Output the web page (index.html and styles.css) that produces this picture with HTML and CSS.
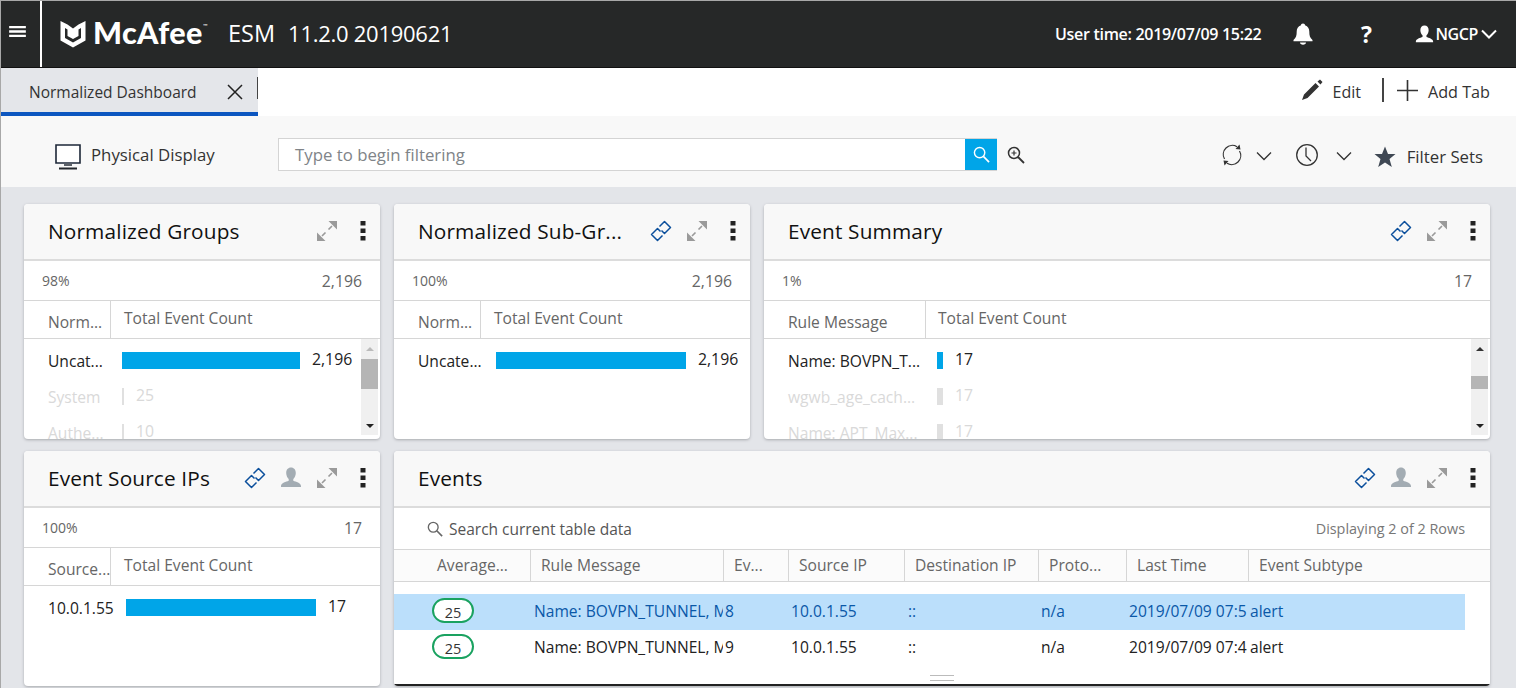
FILE: index.html
```html
<!DOCTYPE html>
<html lang="en">
<head>
<meta charset="utf-8">
<title>McAfee ESM</title>
<link rel="stylesheet" href="styles.css">
</head>
<body>
<svg class="defs" width="0" height="0" aria-hidden="true">
  <symbol id="i-expand" viewBox="0 0 22 22">
    <path d="M1 21V12.500L9.500 21Z M21 1V9.500L12.500 1Z" fill="#9a9a9a"/>
    <path d="M6 16L9.500 12.500M16 6L12.500 9.500" stroke="#9a9a9a" stroke-width="1.600" fill="none"/>
  </symbol>
  <symbol id="i-link" viewBox="0 0 22 22">
    <path d="M9.500 6.500L14.500 1.500L20.500 7.500L14.500 13.500L11.500 10.500M12.500 15.500L7.500 20.500L1.500 14.500L7.500 8.500L10.500 11.500" fill="none" stroke="#0b4f9c" stroke-width="1.500" stroke-linejoin="round"/>
  </symbol>
  <symbol id="i-person" viewBox="0 0 22 22">
    <path d="M11 0.500c3 0 4.800 2.300 4.800 5.500 0 2.600-1.200 4.800-2.500 6v1.800c2.500 1 7.700 2.200 7.700 5.200v1H1v-1c0-3 5.200-4.200 7.700-5.200V12C7.400 10.800 6.200 8.600 6.200 6c0-3.200 1.800-5.500 4.800-5.500Z" fill="currentColor"/>
  </symbol>
  <symbol id="i-kebab" viewBox="0 0 6 22">
    <path d="M0.500 1h5v4.500h-5ZM0.500 8.500h5V13h-5ZM0.500 16h5v4.500h-5Z" fill="#222"/>
  </symbol>
  <symbol id="i-chev" viewBox="0 0 16 10">
    <path d="M1 1.500L8 8.500L15 1.500" fill="none" stroke="currentColor"/>
  </symbol>
  <symbol id="i-search" viewBox="0 0 18 18">
    <circle cx="7" cy="7" r="5.500" fill="none" stroke="currentColor" stroke-width="1.500"/>
    <path d="M11 11L17 17" stroke="currentColor" stroke-width="1.800"/>
  </symbol>
</svg>

<div class="app">
  <header class="topbar">
    <div class="menu-cell">
      <svg class="menu-icon" viewBox="0 0 18 14"><path d="M0 1h18v2.600H0ZM0 5.700h18v2.600H0ZM0 10.400h18V13H0Z" fill="#fff"/></svg>
    </div>
    <svg class="logo-shield" viewBox="0 0 26 28">
      <path d="M0.500 1L7.500 4.500L13 8.500L18.500 4.500L25.500 1V20.500L13 27.500L0.500 20.500Z M5 8V18L13 22.500L21 18V8L18.500 9.500V16L13 19L7.500 16V9.500Z" fill="#fff" fill-rule="evenodd"/>
    </svg>
    <span class="logo-text">McAfee<sup class="tm">™</sup></span>
    <span class="product">ESM</span>
    <span class="version">11.2.0 20190621</span>
    <span class="user-time">User time: 2019/07/09 15:22</span>
    <svg class="bell" viewBox="0 0 22 22"><path d="M11 0.500c1.300 0 2 .8 2 1.800 3 .9 4.300 3.400 4.300 6.200 0 4 .6 6.200 3.200 8.500v1.300H1.500V17c2.600-2.300 3.200-4.500 3.200-8.500 0-2.800 1.300-5.300 4.300-6.200 0-1 .7-1.800 2-1.800ZM8 19.500h6c0 1.300-1.300 2.200-3 2.200s-3-.9-3-2.200Z" fill="#fff"/></svg>
    <span class="help">?</span>
    <svg class="user-icon"><use href="#i-person"/></svg>
    <span class="user-name">NGCP</span>
    <svg class="user-chev"><use href="#i-chev"/></svg>
  </header>

  <div class="tabbar">
    <div class="tab">
      <span class="tab-label">Normalized Dashboard</span>
      <svg class="tab-close" viewBox="0 0 16 16"><path d="M1 1L15 15M15 1L1 15" stroke="#222" stroke-width="1.500"/></svg>
      <span class="tab-sep"></span>
    </div>
    <div class="tab-actions">
      <svg class="pencil" viewBox="0 0 22 22"><path d="M1 21L3 15.500L14.500 4L18 7.500L6.500 19Z M16.500 2.500L19 0.500L21.500 3L19.500 5.500Z" fill="#333"/></svg>
      <span class="edit">Edit</span>
      <span class="action-sep"></span>
      <svg class="plus" viewBox="0 0 22 22"><path d="M11 0V22M0 11H22" stroke="#333" stroke-width="1.700"/></svg>
      <span class="addtab">Add Tab</span>
    </div>
  </div>

  <div class="toolbar">
    <svg class="monitor" viewBox="0 0 26 26"><path d="M1 1H25V19H1Z" fill="#fff" stroke="#1d2738" stroke-width="1.600"/><path d="M9 19.500H17V22H9Z" fill="#5b6068"/><path d="M4 23.500H22V25.500H4Z" fill="#22262c"/></svg>
    <span class="display-name">Physical Display</span>
    <div class="filter">
      <span class="filter-text">Type to begin filtering</span>
      <span class="filter-btn"><svg class="filter-glass"><use href="#i-search"/></svg></span>
    </div>
    <svg class="zoom-plus" viewBox="0 0 18 18"><circle cx="7" cy="7" r="5.500" fill="none" stroke="#333" stroke-width="1.500"/><path d="M11 11L17 17" stroke="#333" stroke-width="1.800"/><path d="M4.500 7H9.500M7 4.500V9.500" stroke="#333" stroke-width="1.200"/></svg>
    <div class="tools">
      <svg class="refresh" viewBox="0 0 24 24"><path d="M4.500 16A9 9 0 0 1 17 3.800M19.500 8A9 9 0 0 1 7 20.200" fill="none" stroke="#333" stroke-width="1.200"/><path d="M19.500 1.500L20.500 6.500L15.500 6Z M4.500 22.500L3.500 17.500L8.500 18Z" fill="#333"/></svg>
      <svg class="chev chev-a"><use href="#i-chev"/></svg>
      <svg class="clock" viewBox="0 0 24 24"><circle cx="12" cy="12" r="10.300" fill="none" stroke="#333" stroke-width="1.300"/><path d="M11 4.500V13L16 18" fill="none" stroke="#333" stroke-width="1.300"/></svg>
      <svg class="chev chev-b"><use href="#i-chev"/></svg>
      <svg class="star" viewBox="0 0 22 22"><path d="M11 0.500L14 8H21.500L15.500 13L17.800 21L11 16.500L4.200 21L6.500 13L0.500 8H8Z" fill="#3f4854"/></svg>
      <span class="filter-sets">Filter Sets</span>
    </div>
  </div>

  <main class="grid">
    <section class="card">
      <div class="card-head">
        <h2 class="card-title">Normalized Groups</h2>
        <svg class="ic-expand"><use href="#i-expand"/></svg>
        <svg class="ic-kebab"><use href="#i-kebab"/></svg>
      </div>
      <div class="stat"><span class="stat-pct">98%</span><span class="stat-val">2,196</span></div>
      <div class="cols cols-small"><span class="col-a">Norm...</span><span class="col-b">Total Event Count</span></div>
      <div class="body">
        <div class="rows">
          <div class="row row-small"><span class="name">Uncat...</span><span class="bar" style="width:178px"></span><span class="val">2,196</span></div>
          <div class="row row-small dim"><span class="name">System</span><span class="bar" style="width:2px"></span><span class="val">25</span></div>
          <div class="row row-small dim"><span class="name">Authe...</span><span class="bar" style="width:2px"></span><span class="val">10</span></div>
        </div>
        <div class="scroll scroll-a"><span class="up"></span><span class="thumb thumb-a"></span><span class="down"></span></div>
      </div>
    </section>

    <section class="card">
      <div class="card-head">
        <h2 class="card-title">Normalized Sub-Gr...</h2>
        <svg class="ic-link"><use href="#i-link"/></svg>
        <svg class="ic-expand"><use href="#i-expand"/></svg>
        <svg class="ic-kebab"><use href="#i-kebab"/></svg>
      </div>
      <div class="stat"><span class="stat-pct">100%</span><span class="stat-val">2,196</span></div>
      <div class="cols cols-small"><span class="col-a">Norm...</span><span class="col-b">Total Event Count</span></div>
      <div class="body">
        <div class="rows">
          <div class="row row-small"><span class="name name-sub">Uncate...</span><span class="bar" style="width:190px"></span><span class="val">2,196</span></div>
        </div>
      </div>
    </section>

    <section class="card">
      <div class="card-head">
        <h2 class="card-title">Event Summary</h2>
        <svg class="ic-link"><use href="#i-link"/></svg>
        <svg class="ic-expand"><use href="#i-expand"/></svg>
        <svg class="ic-kebab"><use href="#i-kebab"/></svg>
      </div>
      <div class="stat"><span class="stat-pct">1%</span><span class="stat-val">17</span></div>
      <div class="cols cols-wide"><span class="col-a">Rule Message</span><span class="col-b">Total Event Count</span></div>
      <div class="body">
        <div class="rows">
          <div class="row row-wide"><span class="name">Name: BOVPN_T...</span><span class="bar" style="width:6px"></span><span class="val">17</span></div>
          <div class="row row-wide dim"><span class="name">wgwb_age_cach...</span><span class="bar" style="width:6px"></span><span class="val">17</span></div>
          <div class="row row-wide dim"><span class="name">Name: APT_Max...</span><span class="bar" style="width:6px"></span><span class="val">17</span></div>
        </div>
        <div class="scroll"><span class="up"></span><span class="thumb thumb-b"></span><span class="down"></span></div>
      </div>
    </section>

    <section class="card">
      <div class="card-head">
        <h2 class="card-title">Event Source IPs</h2>
        <svg class="ic-link"><use href="#i-link"/></svg>
        <svg class="ic-person"><use href="#i-person"/></svg>
        <svg class="ic-expand"><use href="#i-expand"/></svg>
        <svg class="ic-kebab"><use href="#i-kebab"/></svg>
      </div>
      <div class="stat"><span class="stat-pct">100%</span><span class="stat-val">17</span></div>
      <div class="cols cols-small"><span class="col-a">Source...</span><span class="col-b">Total Event Count</span></div>
      <div class="body">
        <div class="rows">
          <div class="row row-ip"><span class="name">10.0.1.55</span><span class="bar" style="width:190px"></span><span class="val">17</span></div>
        </div>
      </div>
    </section>

    <section class="card card-events">
      <div class="card-head">
        <h2 class="card-title">Events</h2>
        <svg class="ic-link"><use href="#i-link"/></svg>
        <svg class="ic-person"><use href="#i-person"/></svg>
        <svg class="ic-expand"><use href="#i-expand"/></svg>
        <svg class="ic-kebab"><use href="#i-kebab"/></svg>
      </div>
      <div class="search-row">
        <svg class="search-glass"><use href="#i-search"/></svg>
        <span class="search-text">Search current table data</span>
        <span class="rowcount">Displaying 2 of 2 Rows</span>
      </div>
      <div class="thead tgrid">
        <span class="th th-first">Average...</span>
        <span class="th">Rule Message</span>
        <span class="th">Ev...</span>
        <span class="th">Source IP</span>
        <span class="th">Destination IP</span>
        <span class="th">Proto...</span>
        <span class="th">Last Time</span>
        <span class="th">Event Subtype</span>
      </div>
      <div class="tbody">
        <div class="tr tr-sel tgrid">
          <span class="td-pill"><span class="pill">25</span></span>
          <span class="td td-rule">Name: BOVPN_TUNNEL, M</span>
          <span class="td td-ev">8</span>
          <span class="td td-ip">10.0.1.55</span>
          <span class="td td-dest">::</span>
          <span class="td td-proto">n/a</span>
          <span class="td td-time">2019/07/09 07:5</span>
          <span class="td td-sub">alert</span>
        </div>
        <div class="tr tgrid">
          <span class="td-pill"><span class="pill">25</span></span>
          <span class="td td-rule">Name: BOVPN_TUNNEL, M</span>
          <span class="td td-ev">9</span>
          <span class="td td-ip">10.0.1.55</span>
          <span class="td td-dest">::</span>
          <span class="td td-proto">n/a</span>
          <span class="td td-time">2019/07/09 07:4</span>
          <span class="td td-sub">alert</span>
        </div>
        <div class="grip"></div>
      </div>
    </section>
  </main>
</div>
</body>
</html>
```
FILE: styles.css
```css
* { box-sizing: border-box; }
html, body { margin: 0; padding: 0; }
body {
  width: 1516px;
  height: 688px;
  overflow: hidden;
  font-family: "Open Sans", "Noto Sans", sans-serif;
  color: #333;
  background: #e3e5e9;
}
.defs { display: block; height: 0; }
.app {
  height: 688px;
  display: flex;
  flex-direction: column;
  border-left: 1px solid #a8a8a8;
  border-top: 1px solid #a8a8a8;
}

/* top bar */
.topbar {
  height: 67px;
  flex: none;
  background: #262828;
  border-bottom: 1px solid #111;
  display: flex;
  align-items: center;
  color: #fff;
}
.menu-cell {
  width: 41px;
  height: 100%;
  border-right: 2px solid #fff;
  display: flex;
  align-items: center;
  padding: 0 0 5px 8px;
  flex: none;
}
.menu-icon { width: 17px; height: 13px; display: block; }
.logo-shield { width: 26px; height: 28px; margin-left: 18px; flex: none; }
.logo-text {
  font-family: Lato, "Open Sans", sans-serif;
  font-weight: 900;
  font-size: 30.5px;
  line-height: 1;
  margin-left: 7px;
  letter-spacing: 0.4px;
  position: relative;
  top: -2px;
  width: 135px;
  flex: none;
}
.tm { font-size: 6px; font-weight: 400; vertical-align: 16px; line-height: 0; }
.product {
  font-size: 23.5px;
  position: relative;
  top: -1px;
}
.version {
  font-size: 22px;
  letter-spacing: -0.27px;
  margin-left: 13px;
  position: relative;
  top: -1px;
}
.user-time {
  margin-left: auto;
  font-size: 16px;
  font-weight: 600;
  letter-spacing: -0.3px;
}
.bell { width: 22px; height: 22px; margin-left: 31px; }
.help { font-size: 23px; font-weight: 700; margin-left: 44px; width: 16px; text-align: center; }
.user-icon { width: 19px; height: 19px; margin-left: 41px; color: #fff; }
.user-name { font-size: 16px; font-weight: 600; letter-spacing: -0.4px; margin-left: 1px; }
.user-chev { width: 16px; height: 10px; margin: 0 19px 0 3px; color: #fff; stroke-width: 2; }

/* tab bar */
.tabbar {
  height: 48px;
  flex: none;
  background: #fff;
  display: flex;
  justify-content: space-between;
}
.tab {
  width: 257px;
  background: #e4e6ea;
  border-bottom: 4px solid #0c56c0;
  display: flex;
  align-items: center;
  padding: 4px 0 0 28px;
}
.tab-label { font-size: 15.5px; color: #333; width: 198px; white-space: nowrap; }
.tab-close { width: 16px; height: 16px; flex: none; margin-left: 1px; }
.tab-sep { width: 1px; height: 22px; background: #444; margin-left: 14px; flex: none; margin-top: -8px; }
.tab-actions { display: flex; align-items: center; padding: 0 26px 0 0; }
.pencil { width: 22px; height: 22px; margin-top: -4px; }
.edit { font-size: 16px; margin-left: 10px; }
.action-sep { width: 2px; height: 24px; background: #444; margin: -4px 13px 0 21px; }
.plus { width: 21px; height: 21px; margin-top: -3px; }
.addtab { font-size: 16.2px; margin-left: 10px; }

/* tool bar */
.toolbar {
  height: 71px;
  flex: none;
  background: #f8f8f8;
  display: flex;
  align-items: center;
  padding-top: 6px;
}
.monitor { width: 26px; height: 26px; margin-left: 54px; flex: none; margin-top: 5px; }
.display-name { font-size: 16.8px; margin-left: 10px; width: 187px; white-space: nowrap; }
.filter {
  width: 719px;
  height: 33px;
  background: #fff;
  border: 1px solid #d4d4d4;
  border-right: none;
  display: flex;
  align-items: center;
  justify-content: space-between;
}
.filter-text { font-size: 16.8px; color: #808488; margin-left: 16px; }
.filter-btn {
  width: 32px;
  height: 31px;
  background: #00a5e8;
  display: flex;
  align-items: center;
  justify-content: center;
}
.filter-glass { width: 17px; height: 17px; color: #fff; }
.zoom-plus { width: 18px; height: 18px; margin-left: 10px; }
.tools { margin-left: auto; display: flex; align-items: center; padding-right: 33px; }
.refresh { width: 24px; height: 24px; }
.chev { width: 16px; height: 10px; color: #333; margin-top: 3px; stroke-width: 1.3; }
.chev-a { margin-left: 12px; }
.clock { width: 24px; height: 24px; margin-left: 23px; }
.chev-b { margin-left: 17px; }
.star { width: 22px; height: 22px; margin-left: 22px; margin-top: 4px; }
.filter-sets { font-size: 16.8px; margin-left: 11px; margin-top: 4px; }

/* grid */
.grid {
  flex: 1;
  display: grid;
  grid-template-columns: 356px 356px 726px;
  grid-template-rows: 235px 235px;
  column-gap: 14px;
  row-gap: 12px;
  padding: 17px 0 0 23px;
  overflow: hidden;
}
.card {
  background: #fff;
  border-radius: 4px;
  box-shadow: 0 1px 3px #a8aaae;
  overflow: hidden;
  display: flex;
  flex-direction: column;
}
.card-events { grid-column: 2 / 4; }
.card-head {
  height: 57px;
  flex: none;
  background: #f8f8f8;
  border-bottom: 2px solid #dcdcdc;
  display: flex;
  align-items: center;
  padding: 0 14px 2px 24px;
}
.card-title {
  margin: 1px auto 0 0;
  font-size: 20.8px;
  font-weight: 400;
  color: #111;
  letter-spacing: 0.15px;
  white-space: nowrap;
}
.ic-link { width: 22px; height: 22px; margin-left: 14px; flex: none; }
.ic-person { width: 22px; height: 22px; margin-left: 14px; color: #a3acb3; flex: none; }
.ic-expand { width: 22px; height: 22px; margin-left: 14px; flex: none; }
.ic-kebab { width: 6px; height: 22px; margin-left: 22px; flex: none; }
.stat {
  height: 40px;
  flex: none;
  display: flex;
  justify-content: space-between;
  align-items: center;
  padding: 0 18px;
  border-bottom: 1px solid #d6d6d6;
  color: #666;
}
.stat-pct { font-size: 14px; }
.stat-val { font-size: 15.8px; }
.cols {
  height: 38px;
  flex: none;
  display: flex;
  border-bottom: 1px solid #d6d6d6;
  font-size: 15.6px;
  color: #666;
}
.col-a {
  border-right: 1px solid #d6d6d6;
  padding: 10px 0 0 24px;
  white-space: nowrap;
  overflow: hidden;
  flex: none;
}
.cols-small .col-a { width: 87px; }
.cols-wide .col-a { width: 162px; }
.col-b { padding: 6px 0 0 13px; }
.cols-wide .col-b { padding-left: 12px; }
.body { flex: 1; min-height: 0; display: flex; overflow: hidden; }
.rows { flex: 1; min-width: 0; padding-top: 3px; }
.row {
  height: 36px;
  display: flex;
  align-items: center;
  font-size: 15.6px;
  color: #222;
  white-space: nowrap;
}
.name { padding-left: 24px; padding-top: 1px; flex: none; }
.row-small .name { width: 98px; }
.row-small .name-sub { width: 102px; }
.row-wide .name { width: 173px; }
.row-ip .name { width: 102px; }
.bar { height: 17px; background: #00a5e8; flex: none; display: block; }
.val { margin-left: 12px; margin-top: -3px; font-size: 15.8px; }
.dim { color: #d9d9d9; }
.dim .bar { background: #e0e0e0; }
.scroll {
  width: 17px;
  margin: 0 2px 4px 0;
  flex: none;
  background: #f0f0f0;
  display: flex;
  flex-direction: column;
  align-items: center;
  padding-top: 8px;
  position: relative;
}
.scroll .up, .scroll .down {
  width: 0;
  height: 0;
  border-left: 4px solid transparent;
  border-right: 4px solid transparent;
}
.scroll .up { border-bottom: 4px solid #333; }
.scroll-a .up { border-bottom-color: #bbb; }
.scroll .down { border-top: 4px solid #222; margin-top: auto; margin-bottom: 7px; }
.thumb { width: 17px; background: #b5b5b5; display: block; }
.thumb-a { height: 30px; margin-top: 8px; }
.thumb-b { height: 13px; margin-top: 25px; }

/* events */
.search-row {
  height: 41px;
  flex: none;
  display: flex;
  align-items: center;
  padding: 0 25px 0 33px;
}
.search-glass { width: 16px; height: 16px; color: #666; flex: none; }
.search-text { font-size: 15.5px; color: #555; margin-left: 6px; }
.rowcount { font-size: 14.4px; color: #777; margin-left: auto; }
.tgrid {
  display: grid;
  grid-template-columns: 136px 193px 65px 116px 134px 88px 122px 1fr;
}
.thead {
  height: 33px;
  flex: none;
  border-top: 1px solid #d6d6d6;
  border-bottom: 1px solid #d6d6d6;
  background: #fbfbfb;
}
.th {
  font-size: 15.6px;
  color: #666;
  padding: 4px 0 0 10px;
  border-left: 1px solid #d6d6d6;
  white-space: nowrap;
  overflow: hidden;
}
.th-first { border-left: none; padding-left: 43px; }
.tbody { flex: 1; padding-top: 12px; border-bottom: 2px solid #222; position: relative; overflow: hidden; }
.tr {
  height: 36px;
  width: 1071px;
  align-items: center;
  font-size: 15.6px;
  color: #222;
}
.tr-sel { background: #bbdffb; color: #0a58a8; }
.td-pill { padding: 0 0 4px 38px; }
.pill {
  display: block;
  width: 42px;
  height: 25px;
  border: 2px solid #1aa260;
  border-radius: 13px;
  background: #fff;
  color: #333;
  font-size: 14.5px;
  text-align: center;
  line-height: 25px;
}
.td { white-space: nowrap; overflow: hidden; padding-bottom: 2px; }
.td-rule { padding-left: 4px; }
.td-ev { margin-left: 2px; }
.td-ip { margin-left: 3px; }
.td-dest { margin-left: 4px; }
.td-proto { margin-left: 3px; }
.td-time { margin-left: 3px; }
.td-sub { margin-left: 2px; }
.grip {
  position: absolute;
  left: 536px;
  bottom: 3px;
  width: 24px;
  height: 6px;
  border-top: 1px solid #bbb;
  border-bottom: 1px solid #bbb;
}
```
